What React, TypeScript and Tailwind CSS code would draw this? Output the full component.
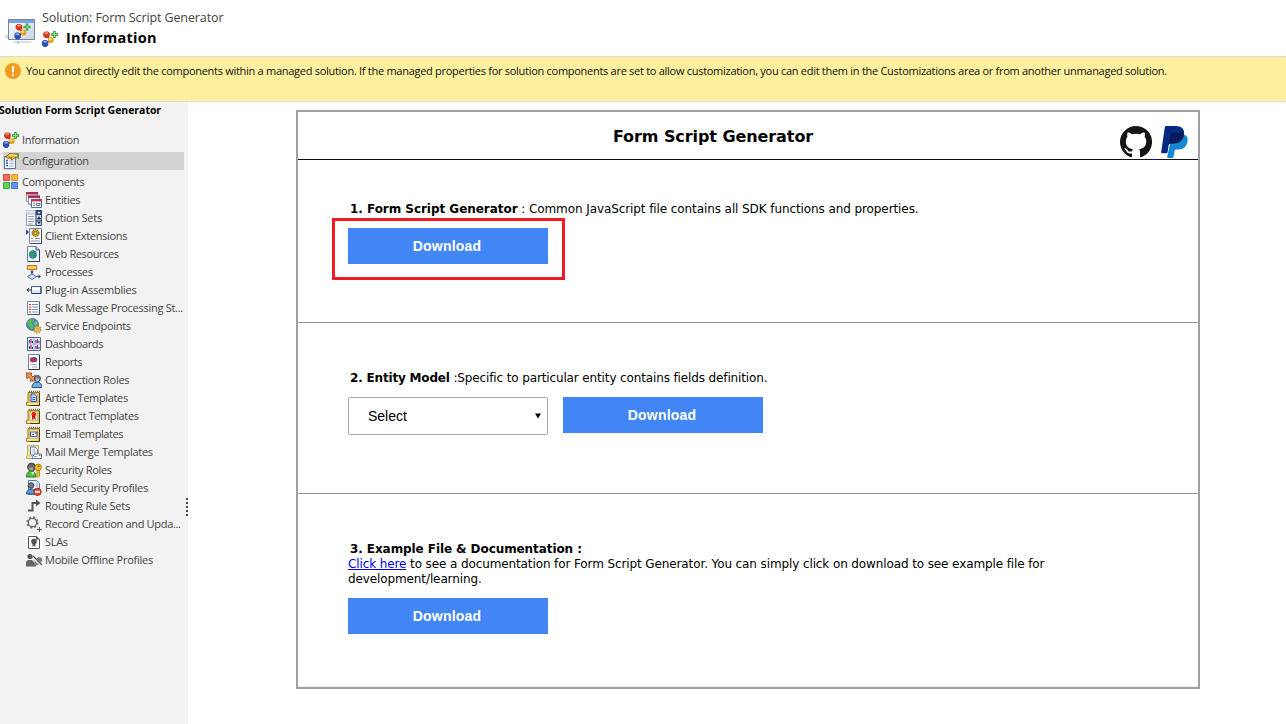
import type { ReactNode } from "react";

function Icon({ children, size = "size-4" }: { children: ReactNode; size?: string }) {
  return (
    <svg viewBox="0 0 16 16" className={`${size} block shrink-0`}>
      {children}
    </svg>
  );
}

const solutionShapes = (
  <>
    <path d="M5 5L8.500 9.500L4 12" fill="none" stroke="#8a3a1c" strokeWidth="1.500" />
    <path d="M1.200 2L3 .4H6L7.800 2V5L6 7H3.200L1.200 5Z" fill="#d2391f" />
    <path d="M2.200 2.200L3.500 1.100H5.700L6.500 2.200L4.500 3.600Z" fill="#f58d72" />
    <circle cx="8.800" cy="9" r="3" fill="#e8a01e" />
    <circle cx="8.200" cy="8.300" r="1.300" fill="#ffe28a" />
    <path d="M0 10.500L1.500 9H4.500L6.300 10.500V14L4.500 16H1.800L0 14Z" fill="#2a52b4" />
    <path d="M1 10.700L2.200 9.700H4.200L5.200 10.700L3.200 12Z" fill="#8badf0" />
    <path d="M11.300 0H13.700V2.300H16V4.700H13.700V7H11.300V4.700H9V2.300H11.300Z" fill="#269331" />
    <path d="M12 1H13V3H15V4H13V6H12V4H10V3H12Z" fill="#8be383" />
  </>
);

const templateShapes = (
  <>
    <path d="M2 2.500H13.500V15.500H.5V12.500H2Z" fill="#e2c766" stroke="#a07f2a" />
    <path d="M4 4H11.500V12.500H4Z" fill="#fff8dc" stroke="#b8983c" strokeWidth=".6" />
    <path d="M1 13H11.500V14.500H1Z" fill="#fbe9a0" />
    <path d="M3 1.500H14" stroke="#7a632a" strokeWidth="1.600" strokeDasharray="1 1" />
    <path d="M13.500 3V15.500H4" fill="none" stroke="#4a3a1a" />
  </>
);

const icons: Record<string, ReactNode> = {
  info: solutionShapes,
  config: (
    <>
      <path d="M1.500 3.500H12.500V15.500H1.500Z" fill="#f6f9ff" stroke="#5a7194" />
      <path d="M3 7.500H5M3 10H5M3 12.500H5" stroke="#2b60ab" strokeWidth="1.500" />
      <path d="M6 8H11M6 10.500H11M6 13H11" stroke="#a2b3ce" />
      <path d="M3 4L6 .8H12L16 1V5L12 4.500L9 7L7.500 6L8.500 4.500L5 5.500Z" fill="#e0b32c" stroke="#74540f" strokeWidth=".8" />
      <path d="M6 2H11L14 3" fill="none" stroke="#fff1a0" />
      <path d="M14 0L16 1V6L14 4Z" fill="#58a153" />
    </>
  ),
  components: (
    <>
      <path d="M.5.500H6.500V6.500H.5Z" fill="#f66a63" stroke="#d94740" />
      <path d="M8.500.500H14.500V6.500H8.500Z" fill="#fbb83e" stroke="#dc9420" />
      <path d="M.5 8.500H6.500V14.500H.5Z" fill="#60d55d" stroke="#35aa39" />
      <path d="M8.500 8.500H14.500V14.500H8.500Z" fill="#6894f1" stroke="#4472d3" />
    </>
  ),
  entities: (
    <>
      <path d="M.5.500H11.500V9.500H.5Z" fill="#f7f8fc" stroke="#8792ac" />
      <path d="M0 0H12V2.500H0Z" fill="#a33057" />
      <path d="M2.500 4H13.500V12.500H2.500Z" fill="#f7f8fc" stroke="#8792ac" />
      <path d="M2 3.500H14V6H2Z" fill="#a33057" />
      <path d="M5.500 7.500H15.500V15.500H5.500Z" fill="#fff" stroke="#53688d" />
      <path d="M5 7H16V9.500H5Z" fill="#b13a63" />
      <path d="M7 11.500H9M7 13.500H9" stroke="#6f83ad" />
      <path d="M10.500 11.500H14V13.500H10.500Z" fill="#fff" stroke="#55719f" />
    </>
  ),
  option: (
    <>
      <path d="M.5.500H10V15.500H.5Z" fill="#fff" stroke="#8799b5" />
      <path d="M0 0H10V4H0Z" fill="#dfe5f0" stroke="#8799b5" strokeWidth=".6" />
      <path d="M2 6.500H8M2 9H8M2 11.500H8M2 14H7" stroke="#879ab5" />
      <path d="M10 .5H15.500V15.500H10Z" fill="#c2cde0" stroke="#334c78" />
      <path d="M10 0H16V5H10Z" fill="#274776" />
      <path d="M11.500 2H14.500L13 4Z" fill="#fff" />
      <path d="M11 9L13 6.500L15 9ZM11 11.500H15L13 14Z" fill="#17243d" />
      <path d="M10 10.200H16" stroke="#334c78" />
    </>
  ),
  client: (
    <>
      <path d="M3.500.500H15.500V15.500H3.500Z" fill="#fff" stroke="#71829c" />
      <path d="M0 1.500L3 4L0 7Z" fill="#2149b4" />
      <circle cx="9.500" cy="5" r="3.500" fill="#d9a91e" stroke="#5d491b" strokeDasharray="1.500 .7" />
      <circle cx="9.500" cy="5" r="1.500" fill="#fff09c" stroke="#58410b" strokeWidth=".7" />
      <path d="M5 10.500H7M9 10.500H14M5 13H14" stroke="#7f92af" />
      <path d="M15.500 2V15.500H5" fill="none" stroke="#33496c" />
    </>
  ),
  web: (
    <>
      <path d="M1.500.500H10L13.500 4V15.500H1.500Z" fill="#f4f8ff" stroke="#63809f" />
      <path d="M10 .5V4H13.500" fill="#c5d2e7" stroke="#314e78" />
      <circle cx="7" cy="8.500" r="4.200" fill="#3978c5" />
      <path d="M3 8L5 5L8 4.500L7 7.500L9 10L7 12.500L5 10Z" fill="#35a347" />
      <path d="M9 6L11 7L10.500 10Z" fill="#57bf56" />
      <path d="M13.500 4V15.500H2" fill="none" stroke="#29436f" />
    </>
  ),
  process: (
    <>
      <path d="M1.500 1.500H10.500V5.500H1.500Z" fill="#ffc85b" stroke="#b97b1d" />
      <path d="M6 6V9M10 12.500H14M6 9V10" fill="none" stroke="#243f7a" />
      <path d="M1.500 12.500L6 10L10.500 12.500L6 15.500Z" fill="#d8e5ff" stroke="#4d6aa6" />
      <path d="M12.500 10.500L15 12.500L12.500 14.500ZM4 7.500H8L6 9.500Z" fill="#243f7a" />
    </>
  ),
  plugin: (
    <>
      <path d="M5.500 4.500H15V11.500H5.500Z" fill="#dae5fc" stroke="#46618f" />
      <path d="M6 5.500H14V8H6Z" fill="#fff" />
      <path d="M.5 8H5M3 6L1 8L3 10" fill="none" stroke="#333" />
      <path d="M15 5V11.500H6" fill="none" stroke="#233b68" />
    </>
  ),
  sdk: (
    <>
      <path d="M1.500 1.500H13.500V14.500H1.500Z" fill="#fff" stroke="#7186ab" />
      <path d="M3 4.500H5M3 7H5M3 9.500H5M3 12H5" stroke="#f0202a" strokeWidth="1.200" />
      <path d="M6 4.500H12M6 7H12M6 9.500H12M6 12H12" stroke="#8294b3" />
      <path d="M13.500 2V14.500H2" fill="none" stroke="#3d5786" />
    </>
  ),
  service: (
    <>
      <circle cx="6.500" cy="6.500" r="6" fill="#4285ba" stroke="#60788d" />
      <path d="M1 4L5 1L8 2L6 5L8 8L6 12L3 9Z" fill="#55b75a" />
      <path d="M9 3L12 5L10 8L8 6Z" fill="#75c978" />
      <circle cx="11.500" cy="11.500" r="3.300" fill="#f4cf57" stroke="#b08a2c" strokeWidth="1.500" strokeDasharray="1.500 1" />
      <circle cx="11.500" cy="11.500" r="1.300" fill="#fff" stroke="#967020" strokeWidth=".7" />
    </>
  ),
  dashboard: (
    <>
      <path d="M1.500 1.500H14.500V14.500H1.500Z" fill="#eff4ff" stroke="#52698f" />
      <path d="M8 2V14M2 8H14" stroke="#8ca4cc" />
      <path d="M3.500 4V7M10 4V7M3.500 10V13M10 10V13" stroke="#3060c4" strokeWidth="1.500" />
      <path d="M5 3V7M11.500 3V7M5 9V13M11.500 9V13" stroke="#cf245d" strokeWidth="1.300" />
      <path d="M6.500 5V7M13 5V7M6.500 11V13M13 11V13" stroke="#202d69" />
    </>
  ),
  report: (
    <>
      <path d="M2.500.500H13.500V15.500H2.500Z" fill="#fff" stroke="#74859f" />
      <ellipse cx="7.500" cy="5.500" rx="3.700" ry="2.500" fill="#d52755" />
      <path d="M7.500 5.500V3C10 3 11 4 11.200 5.500Z" fill="#43539b" />
      <path d="M4 6C5 8 10 8 11 6V7C9 9 5 8.500 4 7Z" fill="#65296e" />
      <path d="M4.500 10.500H11M6 13H11" stroke="#a1aac0" />
      <path d="M13.500 1V15.500H3" fill="none" stroke="#26344f" />
    </>
  ),
  connection: (
    <>
      <path d="M0 1H6L5 3L7 5L9 3V9H4L5 7L3 5L1 7Z" fill="#ed9149" stroke="#8e4317" strokeWidth=".8" />
      <path d="M6 15.500C6 12 8 10 11 10C14 10 16 12 16 15.500Z" fill="#75aadf" stroke="#285687" />
      <circle cx="11.500" cy="6.500" r="3" fill="#78828f" stroke="#354556" />
      <path d="M9.500 6.500H13V9H10Z" fill="#a9bed4" />
    </>
  ),
  article: (
    <>
      {templateShapes}
      <path d="M5 4H8.500L10.500 6V11.500H5Z" fill="#b9d2ff" stroke="#365ab0" />
      <path d="M6.500 7.500H9M6.500 9.500H9" stroke="#365ab0" />
    </>
  ),
  contract: (
    <>
      {templateShapes}
      <circle cx="7.800" cy="6.500" r="2.400" fill="#de2020" />
      <path d="M6 8H9L10 12L8 10.500L6 12Z" fill="#c81717" />
    </>
  ),
  email: (
    <>
      {templateShapes}
      <path d="M4.500 6H11V10.500H4.500Z" fill="#fff" stroke="#365ba5" />
      <path d="M6 8.500H8" stroke="#365ba5" />
      <path d="M9 6.500H10.500V8H9Z" fill="#df3427" />
    </>
  ),
  merge: (
    <>
      <path d="M1.500 1.500H12.500V14.500H.5V12H1.500Z" fill="#eee2a9" stroke="#bfae72" />
      <path d="M4.500 3H9L11.500 5.500V11H4.500Z" fill="#f9fbff" stroke="#617ba9" />
      <path d="M6.500 6H9M6.500 8H10" stroke="#8da3cb" />
      <path d="M8 10H15.500V14.500H6Z" fill="#fff" stroke="#5d79aa" />
      <path d="M8 12.500H11" stroke="#8da3cb" />
      <path d="M13 10.500H14.500V12H13Z" fill="#d83e2f" />
    </>
  ),
  security: (
    <>
      <path d="M.5 15C.5 11 2 9.500 5 9C8 9.500 10 11 10 15Z" fill="#54bd44" stroke="#277a24" />
      <circle cx="5.500" cy="5" r="3.900" fill="#666" stroke="#444" />
      <path d="M3 5.500H7V8.500H4Z" fill="#a1a1a1" />
      <path d="M5 10L7 13L8 10Z" fill="#e5ffdf" />
      <circle cx="12.200" cy="5.300" r="3.200" fill="#f7c52c" stroke="#b1860f" />
      <circle cx="12.500" cy="4.300" r="1" fill="#795d18" />
      <path d="M11 8.500H13.500V14L12 15.500L10.500 14L11.500 13L10.500 12L11 11Z" fill="#f7c52c" stroke="#96700d" strokeWidth=".7" />
    </>
  ),
  field: (
    <>
      <path d="M2.500.500H10.500L13.500 3.500V14.500H2.500Z" fill="#eef4ff" stroke="#5278ae" />
      <circle cx="5" cy="5.500" r="2.800" fill="#6d7a8b" stroke="#303f54" />
      <path d="M.5 14C.5 11 2 9 5 9C8 9 9 11 9 14Z" fill="#5d97cd" stroke="#265b8d" />
      <path d="M10 4H12M10 6H12" stroke="#7896bf" />
      <circle cx="11.500" cy="11.800" r="3.700" fill="#e24a2f" stroke="#ac2817" />
      <path d="M9 11.800H14" stroke="#fff" strokeWidth="1.800" />
    </>
  ),
  routing: (
    <>
      <path d="M2 12.500H6.500V5H11" fill="none" stroke="#555" strokeWidth="2" />
      <path d="M10 1.500L14.500 5L10 8.500Z" fill="#555" />
    </>
  ),
  record: (
    <>
      <circle cx="6.500" cy="6.500" r="5.300" fill="none" stroke="#6b6b6b" strokeWidth="1.500" strokeDasharray="2.100 2.060" />
      <circle cx="6.500" cy="6.500" r="4.200" fill="none" stroke="#6b6b6b" strokeWidth="1.300" />
      <path d="M13.500 11V16M11 13.500H16" stroke="#555" />
    </>
  ),
  sla: (
    <>
      <path d="M0 0H16V16H0Z" fill="#fff" />
      <path d="M10 2.500H2.500V14.500H13.500V5" fill="none" stroke="#555" />
      <path d="M10 1.500L14 5.500H10Z" fill="#555" />
      <circle cx="8" cy="7.500" r="2.800" fill="#505050" />
      <path d="M6.500 9H9.500V13L8 11.500L6.500 13Z" fill="#505050" />
    </>
  ),
  mobile: (
    <>
      <circle cx="4" cy="4.500" r="2.600" fill="#555" />
      <path d="M0 14.500V11Q0 8 3 8H6L8 10L10 13V14.500Z" fill="#666" />
      <path d="M7 4L16 13" stroke="#555" strokeWidth="1.300" />
      <path d="M10.500 6.500L12.500 5L16 6V9.500L14 10Z" fill="#777" />
      <path d="M8 8L13 13H10Z" fill="#777" />
    </>
  ),
};

const items = [
  ["entities", "Entities", "tracking-[-0.3px]"],
  ["option", "Option Sets", "tracking-[-0.24px]"],
  ["client", "Client Extensions", "tracking-[-0.32px]"],
  ["web", "Web Resources", "tracking-[-0.38px]"],
  ["process", "Processes", "tracking-[-0.4px]"],
  ["plugin", "Plug-in Assemblies", "tracking-[-0.22px]"],
  ["sdk", "Sdk Message Processing St...", "tracking-[-0.28px]"],
  ["service", "Service Endpoints", "tracking-[-0.3px]"],
  ["dashboard", "Dashboards", "tracking-[-0.4px]"],
  ["report", "Reports", "tracking-[-0.4px]"],
  ["connection", "Connection Roles", "tracking-[-0.3px]"],
  ["article", "Article Templates", "tracking-[-0.34px]"],
  ["contract", "Contract Templates", "tracking-[-0.37px]"],
  ["email", "Email Templates", "tracking-[-0.4px]"],
  ["merge", "Mail Merge Templates", "tracking-[-0.28px]"],
  ["security", "Security Roles", "tracking-[-0.33px]"],
  ["field", "Field Security Profiles", "tracking-[-0.27px]"],
  ["routing", "Routing Rule Sets", "tracking-[-0.25px]"],
  ["record", "Record Creation and Upda...", "tracking-[-0.32px]"],
  ["sla", "SLAs", "tracking-[-0.3px]"],
  ["mobile", "Mobile Offline Profiles", "tracking-[-0.24px]"],
];

function Header() {
  return (
    <header className="flex h-[57px] border-b border-[#d9d9de] pl-1">
      <svg viewBox="0 0 32 32" className="mt-[15px] size-8 shrink-0">
        <defs>
          <linearGradient id="pane" x2="1" y2="1">
            <stop stopColor="#fff" />
            <stop offset="1" stopColor="#c4d3e7" />
          </linearGradient>
        </defs>
        <path d="M0 21L5 19V25L2 23Z" fill="#d9d9d9" />
        <path d="M8 26H29L26 28H11Z" fill="#dedee2" />
        <path d="M4.500 4.500H30.500V24.500H4.500Z" fill="url(#pane)" stroke="#74869e" />
        <path d="M5 5H30V8H5Z" fill="#76a5e2" />
        <path d="M13 26H15V29H13Z" fill="#b2c2ea" />
        <g transform="translate(10.500 8.500)">{solutionShapes}</g>
      </svg>
      <div className="ml-[6px] pt-[9px]">
        <div className="h-[18px] whitespace-nowrap text-[12.5px] leading-[18px] tracking-[-0.11px] text-[#444]">Solution: Form Script Generator</div>
        <div className="mt-px flex h-5 items-center">
          <div className="pt-[2px]">
            <Icon>{icons.info}</Icon>
          </div>
          <h1 className="ml-2 text-[14.5px] leading-5 font-bold tracking-[0.28px] text-black">Information</h1>
        </div>
      </div>
    </header>
  );
}

function Sidebar() {
  return (
    <aside className="flex w-[188px] shrink-0 bg-[#f2f2f2] text-[11px] text-[#444]">
      <div className="w-[185px] shrink-0">
        <h2 className="-ml-px h-[29px] whitespace-nowrap text-[10.5px] leading-4 font-bold tracking-[-0.04px] text-black">Solution Form Script Generator</h2>
        <nav className="pl-[3px]">
          <div className="flex h-[18px] items-center gap-[3px] leading-4 tracking-[-0.34px]">
            <Icon>{icons.info}</Icon>Information
          </div>
          <div className="mt-[3px] mr-px flex h-[18px] items-center gap-[3px] bg-[#d3d3d3] leading-4 tracking-[-0.26px]">
            <Icon>{icons.config}</Icon>Configuration
          </div>
          <div className="mt-[3px] flex h-[18px] items-center gap-[3px] leading-4 tracking-[-0.36px]">
            <Icon>{icons.components}</Icon>Components
          </div>
          <ul className="pl-[23px]">
            {items.map(([icon, label, tracking]) => (
              <li key={label} className="flex h-[18px] items-center gap-[3px] whitespace-nowrap leading-4">
                <Icon>{icons[icon]}</Icon>
                <span className={tracking}>{label}</span>
              </li>
            ))}
          </ul>
        </nav>
      </div>
      <div className="flex w-[3px] flex-col gap-[2px] pt-[396px] pl-px">
        {[0, 1, 2, 3, 4].map((n) => (
          <i key={n} className="size-[2px] bg-[#444]" />
        ))}
      </div>
    </aside>
  );
}

function DownloadButton() {
  return (
    <button className="block h-9 w-[200px] shrink-0 bg-[#4285f4] pr-[2px] text-center font-['Liberation_Sans',sans-serif] text-sm font-bold tracking-[0.2px] text-white">
      Download
    </button>
  );
}

export default function App() {
  return (
    <div className="flex h-[724px] w-[1286px] flex-col overflow-hidden bg-white font-['Open_Sans',sans-serif]">
      <Header />
      <div className="flex h-[45px] shrink-0 border-b border-[#dcdcdc] bg-[#fff09f] pt-[6px] pl-[5px]">
        <svg viewBox="0 0 16 16" className="size-4 shrink-0">
          <circle cx="8" cy="8" r="8" fill="#f39a20" />
          <path d="M6.800 3H9.200L8.800 9.500H7.200ZM7 10.800H9V12.800H7Z" fill="#fff" />
        </svg>
        <p className="ml-[5px] h-4 whitespace-nowrap text-[11px] leading-4 tracking-[-0.28px] text-[#111]">
          You cannot directly edit the components within a managed solution. If the managed properties for solution components are set to allow customization, you can edit them in the Customizations area or from another unmanaged solution.
        </p>
      </div>
      <div className="flex min-h-0 flex-1">
        <Sidebar />
        <main className="flex-1 pt-2 pl-[108px]">
          <div className="h-[579px] w-[904px] border-2 border-[#a0a0a0] font-['DejaVu_Sans',sans-serif] text-xs text-black">
            <div className="relative grid h-12 grid-cols-[1fr_auto_1fr] border-b border-[#111]">
              <span />
              <h2 className="mr-[70px] pt-[13px] text-base leading-6 font-bold tracking-[-0.08px]">Form Script Generator</h2>
              <div className="flex justify-end gap-2 pt-[14px] pr-2">
                <svg viewBox="0 0 16 16" className="size-8">
                  <path fill="#161616" d="M8 0C3.580 0 0 3.580 0 8c0 3.540 2.290 6.530 5.470 7.590.4.070.55-.17.55-.38 0-.19-.01-.82-.01-1.490-2.010.37-2.530-.49-2.690-.94-.09-.23-.48-.94-.82-1.130-.28-.15-.68-.52-.01-.53.63-.01 1.080.58 1.230.82.72 1.210 1.870.87 2.330.66.07-.52.28-.87.51-1.070-1.780-.2-3.640-.89-3.640-3.950 0-.87.31-1.590.82-2.150-.08-.2-.36-1.020.08-2.120 0 0 .67-.21 2.200.82.64-.18 1.320-.27 2-.27s1.360.09 2 .27c1.530-1.040 2.200-.82 2.200-.82.44 1.100.16 1.920.08 2.120.51.56.82 1.270.82 2.150 0 3.070-1.870 3.750-3.650 3.950.29.25.54.73.54 1.480 0 1.070-.01 1.930-.01 2.200 0 .21.15.46.55.38A8 8 0 0 0 8 0Z" />
                </svg>
                <svg viewBox="0 0 30 32" className="h-8 w-[30px]">
                  <path fill="#1587d3" d="M12 8.500H24Q28.500 10 27.500 16Q26 23.500 18 23.500H16Q14.800 23.500 14.500 25L13.500 31Q13.300 32 12.300 32H8Q7 32 7.200 31Z" />
                  <path fill="#04297f" d="M6.200 0H16Q24.500 0 24 8Q23 17.500 13.500 17.500H10.500Q9 17.500 8.700 19L7.500 26.500Q7.300 27.200 6.500 27.200H2Q1 27.200 1.200 26L4.800 1.200Q5 0 6.200 0Z" />
                  <path fill="#041c5c" d="M11.800 7.300Q12 6.800 13 6.800H20Q22.500 6.800 24 8Q23 17.500 13.500 17.500H10.500Q9.500 17.500 9.100 18.300L10.800 8.300Z" />
                </svg>
              </div>
              <i className="absolute right-[41px] -bottom-px h-px w-[5px] bg-[#0000ee]" />
            </div>
            <section className="h-[163px] border-b border-[#999] pt-[42px] pl-[50px]">
              <p className="h-[15px] pl-[2px] leading-[15px] tracking-[-0.09px]"><b className="tracking-[-0.04px]">1. Form Script Generator</b> : Common JavaScript file contains all SDK functions and properties.</p>
              <div className="mt-px -ml-4 h-[62px] w-[233px] border-3 border-[#ed1c24] pt-[7px] pl-[13px]">
                <DownloadButton />
              </div>
            </section>
            <section className="h-[171px] border-b border-[#999] pt-12 pl-[50px]">
              <p className="h-[15px] pl-[2px] leading-[15px] tracking-[-0.13px]"><b className="tracking-[-0.18px]">2. Entity Model</b> :Specific to particular entity contains fields definition.</p>
              <div className="mt-[11px] flex gap-[15px]">
                <button className="flex h-[38px] w-[200px] items-center justify-between rounded-[2px] border border-[#a6a6a6] bg-white pr-[6px] pl-[19px] font-['Liberation_Sans',sans-serif] text-sm">
                  Select
                  <svg viewBox="0 0 7 6" className="mb-px h-[6px] w-[6px]"><path d="M0 0H7L3.500 6Z" /></svg>
                </button>
                <DownloadButton />
              </div>
            </section>
            <section className="h-[193px] border-b border-[#eee] pt-12 pl-[50px]">
              <p className="h-[15px] pl-[2px] leading-[15px] font-bold tracking-[-0.08px]">3. Example File &amp; Documentation :</p>
              <p className="w-[720px] leading-[15px] tracking-[-0.11px]">
                <a href="#" className="text-[#0000ee] underline">Click here</a> to see a documentation for Form Script Generator. You can simply click on download to see example file for<br />development/learning.
              </p>
              <div className="mt-[11px]">
                <DownloadButton />
              </div>
            </section>
          </div>
        </main>
      </div>
    </div>
  );
}
